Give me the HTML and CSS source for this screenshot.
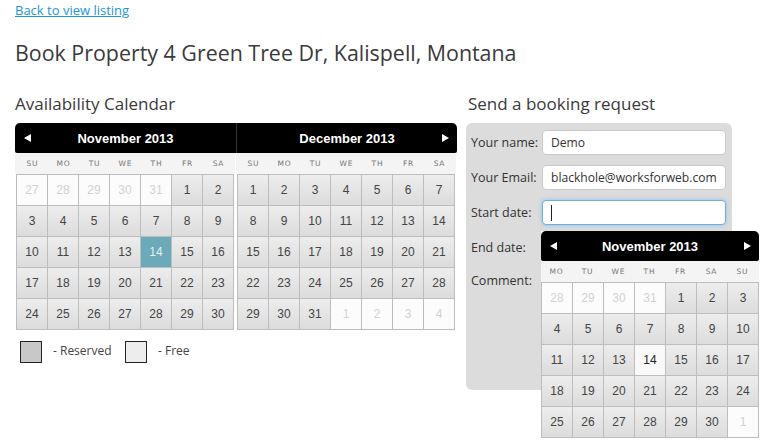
FILE: index.html
```html
<!DOCTYPE html>
<html>
<head>
<meta charset="utf-8">
<title>Book Property</title>
<link rel="stylesheet" href="styles.css">
</head>
<body>
<div class="page">
  <div class="back-row"><a class="back" href="#">Back to view listing</a></div>
  <h1 class="title">Book Property 4 Green Tree Dr, Kalispell, Montana</h1>
  <div class="main">
    <section class="avail">
      <h2 class="sub">Availability Calendar</h2>
      <div class="cal">
        <div class="cal-head">
          <div class="ch-half">
            <svg class="arrow left" width="7" height="8" viewBox="0 0 7 8"><polygon points="7,0 7,8 0,4" fill="#fff"/></svg>
            <span class="month">November 2013</span>
          </div>
          <div class="ch-half second">
            <span class="month">December 2013</span>
            <svg class="arrow right" width="7" height="8" viewBox="0 0 7 8"><polygon points="0,0 7,4 0,8" fill="#fff"/></svg>
          </div>
        </div>
        <div class="cal-body">
          <div class="month-block">
            <div class="wd"><span>SU</span><span>MO</span><span>TU</span><span>WE</span><span>TH</span><span>FR</span><span>SA</span></div>
            <div class="grid">
              <span class="o">27</span><span class="o">28</span><span class="o">29</span><span class="o">30</span><span class="o">31</span><span>1</span><span>2</span>
              <span>3</span><span>4</span><span>5</span><span>6</span><span>7</span><span>8</span><span>9</span>
              <span>10</span><span>11</span><span>12</span><span>13</span><span class="s">14</span><span>15</span><span>16</span>
              <span>17</span><span>18</span><span>19</span><span>20</span><span>21</span><span>22</span><span>23</span>
              <span>24</span><span>25</span><span>26</span><span>27</span><span>28</span><span>29</span><span>30</span>
            </div>
          </div>
          <div class="month-block">
            <div class="wd"><span>SU</span><span>MO</span><span>TU</span><span>WE</span><span>TH</span><span>FR</span><span>SA</span></div>
            <div class="grid">
              <span>1</span><span>2</span><span>3</span><span>4</span><span>5</span><span>6</span><span>7</span>
              <span>8</span><span>9</span><span>10</span><span>11</span><span>12</span><span>13</span><span>14</span>
              <span>15</span><span>16</span><span>17</span><span>18</span><span>19</span><span>20</span><span>21</span>
              <span>22</span><span>23</span><span>24</span><span>25</span><span>26</span><span>27</span><span>28</span>
              <span>29</span><span>30</span><span>31</span><span class="o">1</span><span class="o">2</span><span class="o">3</span><span class="o">4</span>
            </div>
          </div>
        </div>
      </div>
      <div class="legend">
        <span class="swatch reserved"></span><span class="legend-text">- Reserved</span>
        <span class="swatch free"></span><span class="legend-text">- Free</span>
      </div>
    </section>
    <section class="booking">
      <h2 class="sub sub-right">Send a booking request</h2>
      <div class="form-box">
        <div class="row"><label class="lbl">Your name:</label><div class="inp">Demo</div></div>
        <div class="row"><label class="lbl">Your Email:</label><div class="inp">blackhole@worksforweb.com</div></div>
        <div class="row start">
          <label class="lbl">Start date:</label><div class="inp focus"><span class="caret"></span></div>
          <div class="picker">
            <div class="cal-head single">
              <div class="ch-half full">
                <svg class="arrow left" width="7" height="8" viewBox="0 0 7 8"><polygon points="7,0 7,8 0,4" fill="#fff"/></svg>
                <span class="month">November 2013</span>
                <svg class="arrow right" width="7" height="8" viewBox="0 0 7 8"><polygon points="0,0 7,4 0,8" fill="#fff"/></svg>
              </div>
            </div>
            <div class="wd"><span>MO</span><span>TU</span><span>WE</span><span>TH</span><span>FR</span><span>SA</span><span>SU</span></div>
            <div class="grid">
              <span class="o">28</span><span class="o">29</span><span class="o">30</span><span class="o">31</span><span>1</span><span>2</span><span>3</span>
              <span>4</span><span>5</span><span>6</span><span>7</span><span>8</span><span>9</span><span>10</span>
              <span>11</span><span>12</span><span>13</span><span class="t">14</span><span>15</span><span>16</span><span>17</span>
              <span>18</span><span>19</span><span>20</span><span>21</span><span>22</span><span>23</span><span>24</span>
              <span>25</span><span>26</span><span>27</span><span>28</span><span>29</span><span>30</span><span class="o">1</span>
            </div>
          </div>
        </div>
        <div class="row"><label class="lbl">End date:</label><div class="inp"></div></div>
        <div class="row top"><label class="lbl">Comment:</label><div class="inp area"></div></div>
      </div>
    </section>
  </div>
</div>
</body>
</html>
```

FILE: styles.css
```css
* { box-sizing: border-box; }
html, body { min-height: 448px; }
body {
  margin: 0;
  background: #fff;
  color: #333;
  font-family: "Open Sans", "DejaVu Sans", sans-serif;
}
.page { padding: 0 15px; min-height: 448px; }
.back-row {
  padding-top: 2px;
  font-size: 13px;
  line-height: 17px;
}
.back { color: #1a95dc; text-decoration: underline; }
.title {
  margin: 19px 0 0;
  font-size: 21.4px;
  line-height: 30px;
  font-weight: normal;
  color: #3a3a3a;
}
.main {
  display: flex;
  gap: 9px;
  margin-top: 26px;
}
.avail { width: 442px; }
.booking { width: 266px; }
.sub {
  margin: 0 0 9px;
  font-size: 17px;
  line-height: 20px;
  font-weight: normal;
  color: #3a3a3a;
}
.sub-right { padding-left: 2px; }

/* calendar */
.cal-head {
  display: flex;
  height: 30px;
  background: #000;
  border-radius: 5px 5px 2px 2px;
}
.ch-half {
  position: relative;
  width: 221px;
  display: flex;
  align-items: center;
  justify-content: center;
}
.ch-half.second { border-left: 1px solid #333; }
.ch-half.full { width: 218px; }
.month {
  color: #fff;
  font-family: "Liberation Sans", Arial, sans-serif;
  font-weight: bold;
  font-size: 13px;
}
.arrow { position: absolute; top: 11px; }
.arrow.left { left: 9px; }
.arrow.right { right: 8px; }

.cal-body { display: flex; }
.month-block {
  width: 221px;
  padding-left: 1px;
  background: #fff;
}
.wd {
  display: grid;
  grid-template-columns: repeat(7, 31px);
  height: 21px;
  align-items: center;
  background: #f4f4f4;
  font-family: "DejaVu Sans", sans-serif;
  font-size: 7.5px;
  letter-spacing: 0.8px;
  color: #777;
  text-align: center;
}
.month-block .wd { margin-left: -1px; width: 220px; padding-left: 2px; }
.grid {
  display: grid;
  grid-template-columns: repeat(7, 31px);
  width: 218px;
  border-left: 1px solid #bdbdbd;
  border-top: 1px solid #bdbdbd;
}
.grid span {
  height: 31px;
  border-right: 1px solid #bdbdbd;
  border-bottom: 1px solid #bdbdbd;
  background: linear-gradient(#ededed, #dcdcdc);
  display: flex;
  align-items: center;
  justify-content: center;
  font-family: "Liberation Sans", Arial, sans-serif;
  font-size: 12px;
  color: #444;
}
.grid span.o { background: #fcfcfc; color: #d2d2d2; }
.grid span.s { background: #6aaab9; color: #e6f1f4; }
.grid span.t { background: #f9f9f9; color: #222; }

/* legend */
.legend {
  display: flex;
  align-items: center;
  margin-top: 11px;
  padding-left: 5px;
  font-size: 12px;
  line-height: 16px;
  color: #444;
}
.legend-text { margin: -3px 0 0 11px; width: 72px; }
.swatch {
  width: 22px;
  height: 22px;
  border: 1px solid #222;
}
.swatch.reserved { background: #c8c8c8; }
.swatch.free { background: #ededed; }

/* booking form */
.form-box {
  height: 267px;
  background: #dcdcdc;
  border-radius: 6px;
  padding: 7px 6px 0 5px;
}
.row {
  display: flex;
  align-items: center;
  margin-bottom: 10px;
  position: relative;
}
.row.top { align-items: flex-start; }
.lbl {
  width: 71px;
  font-size: 12.5px;
  color: #333;
  white-space: nowrap;
}
.row.top .lbl { padding-top: 2px; }
.inp {
  width: 184px;
  height: 25px;
  background: #fff;
  border: 1px solid #c9c9c9;
  border-radius: 4px;
  padding: 0 8px;
  font-size: 12.1px;
  line-height: 23px;
  color: #333;
  white-space: nowrap;
}
.inp.focus {
  border-color: #66afe9;
  box-shadow: 0 0 5px rgba(102, 175, 233, 0.6);
  display: flex;
  align-items: center;
}
.caret { width: 1px; height: 16px; background: #222; }
.inp.area { height: 100px; }

.picker {
  position: absolute;
  left: 70px;
  top: 31px;
  width: 218px;
  z-index: 5;
  background: #fff;
}
.picker .wd { width: 218px; }
```
